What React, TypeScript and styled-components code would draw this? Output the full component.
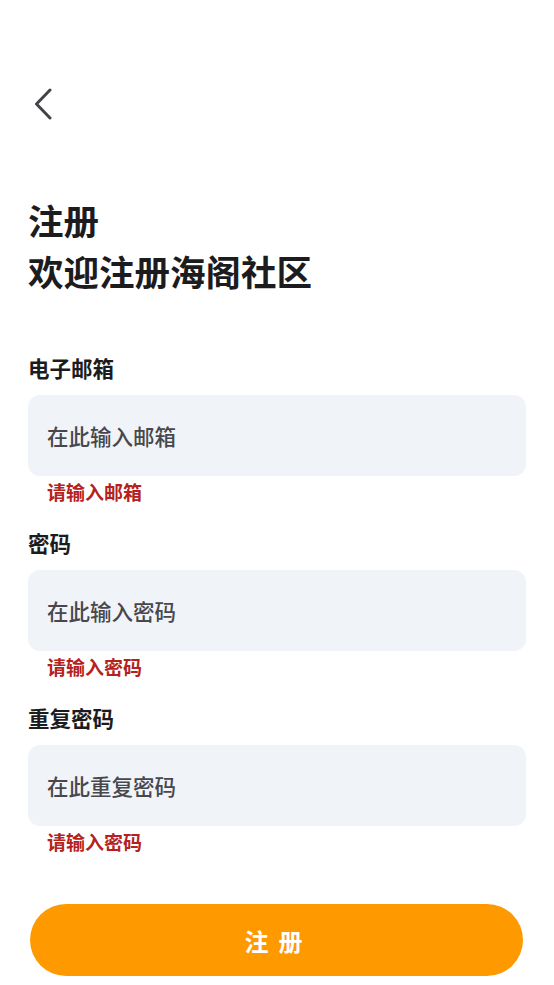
import styled, { createGlobalStyle } from "styled-components";

const Global = createGlobalStyle`
  html, body {
    margin: 0;
    padding: 0;
    background: #ffffff;
  }
  * {
    box-sizing: border-box;
  }
`;

const font = `"Noto Sans CJK SC", "Noto Sans", sans-serif`;

const Page = styled.div`
  display: flex;
  flex-direction: column;
  width: 554px;
  height: 985px;
  padding: 80px 28px 0 28px;
  font-family: ${font};
  background: #fff;
`;

const BackButton = styled.button`
  display: flex;
  align-items: center;
  width: 40px;
  height: 48px;
  padding: 0 0 0 4px;
  border: none;
  background: none;
  cursor: pointer;
`;

const Title = styled.h1`
  margin: 66px 0 0 0;
  font-size: 35.5px;
  line-height: 51px;
  font-weight: 700;
  color: #1c1c1e;
`;

const Form = styled.div`
  display: flex;
  flex-direction: column;
  margin-top: 57px;
`;

const Field = styled.div`
  display: flex;
  flex-direction: column;
  margin-bottom: 23px;
`;

const Label = styled.label`
  font-size: 21.5px;
  line-height: 30px;
  font-weight: 700;
  color: #1c1c1e;
`;

const Input = styled.input`
  height: 81px;
  margin-top: 12px;
  padding: 0 19px;
  border: none;
  border-radius: 12px;
  background: #f0f3f8;
  font-family: ${font};
  font-size: 21.5px;
  font-weight: 500;
  color: #222;
  outline: none;

  &::placeholder {
    color: #47474c;
  }
`;

const Error = styled.div`
  margin-top: 3px;
  padding-left: 19px;
  font-size: 19px;
  line-height: 26px;
  font-weight: 700;
  color: #b5221d;
`;

const Submit = styled.button`
  display: flex;
  flex-shrink: 0;
  align-items: center;
  justify-content: center;
  width: 493px;
  height: 72px;
  margin: 26px 0 0 2px;
  border: none;
  border-radius: 36px;
  background: #ff9900;
  font-family: ${font};
  font-size: 24px;
  font-weight: 700;
  letter-spacing: 10px;
  padding-left: 10px;
  color: #fff;
  cursor: pointer;
`;

const fields = [
  { label: "电子邮箱", placeholder: "在此输入邮箱", error: "请输入邮箱" },
  { label: "密码", placeholder: "在此输入密码", error: "请输入密码" },
  { label: "重复密码", placeholder: "在此重复密码", error: "请输入密码" },
];

const App = () => {
  return (
    <Page>
      <Global />
      <BackButton aria-label="back">
        <svg width="22" height="32" viewBox="0 0 22 32" fill="none">
          <path
            d="M18 2 L4.5 16 L18 30"
            stroke="#444448"
            strokeWidth="3"
            strokeLinecap="round"
            strokeLinejoin="round"
          />
        </svg>
      </BackButton>
      <Title>
        注册
        <br />
        欢迎注册海阁社区
      </Title>
      <Form>
        {fields.map((f) => (
          <Field key={f.placeholder}>
            <Label>{f.label}</Label>
            <Input placeholder={f.placeholder} />
            <Error>{f.error}</Error>
          </Field>
        ))}
      </Form>
      <Submit>注册</Submit>
    </Page>
  );
};

export default App;
